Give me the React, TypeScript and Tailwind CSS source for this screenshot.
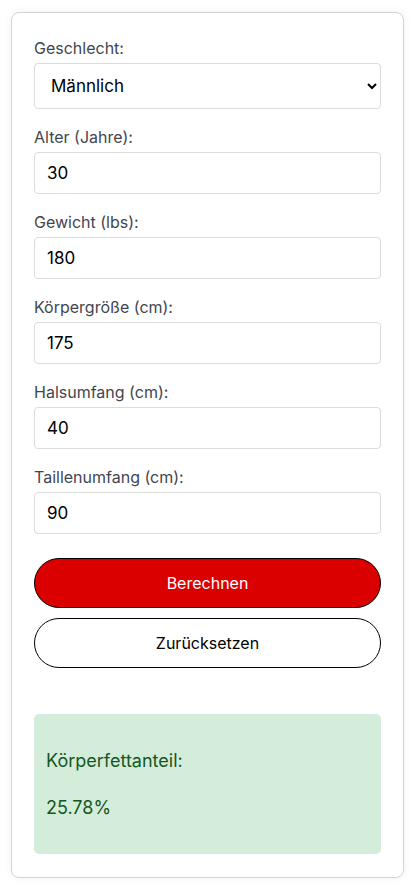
import { useState } from 'react';

const FIELDS: { key: string; label: string }[] = [
  { key: 'age', label: 'Alter (Jahre):' },
  { key: 'weight', label: 'Gewicht (lbs):' },
  { key: 'height', label: 'Körpergröße (cm):' },
  { key: 'neck', label: 'Halsumfang (cm):' },
  { key: 'waist', label: 'Taillenumfang (cm):' },
];

const DEFAULTS: Record<string, string> = {
  age: '30',
  weight: '180',
  height: '175',
  neck: '40',
  waist: '90',
};

export default function App() {
  const [gender, setGender] = useState('male');
  const [values, setValues] = useState<Record<string, string>>(DEFAULTS);
  const [result] = useState('25.78%');

  return (
    <div className="min-h-[895px] bg-white pl-[11px] pr-[12px] pt-[12px] pb-[18px] font-['Inter',_'Noto_Sans',_sans-serif] text-[16px]">
      <div className="rounded-[8px] border border-[#d4d4d4] bg-white px-[22px] pt-[23px] pb-[23px] shadow-[0_0_10px_rgba(0,0,0,0.06)]">
        <div className="mb-4">
          <label className="mb-[3px] block leading-6 text-[#3f4650]">Geschlecht:</label>
          <select
            value={gender}
            onChange={(e) => setGender(e.target.value)}
            className="block h-[46px] w-full rounded-[4px] border border-[#dcdcdc] bg-white px-3 text-[17px] text-black"
          >
            <option value="male">Männlich</option>
            <option value="female">Weiblich</option>
          </select>
        </div>

        {FIELDS.map((f, i) => (
          <div key={f.key} className={i === FIELDS.length - 1 ? 'mb-6' : 'mb-4'}>
            <label className="mb-[3px] block leading-6 text-[#3f4650]">{f.label}</label>
            <input
              type="text"
              value={values[f.key]}
              onChange={(e) => setValues({ ...values, [f.key]: e.target.value })}
              className="block h-[42px] w-full rounded-[4px] border border-[#dcdcdc] bg-white px-3 text-[17px] text-black outline-none"
            />
          </div>
        ))}

        <button className="block h-[50px] w-full rounded-full border border-black bg-[#db0000] text-white">
          Berechnen
        </button>
        <button className="mt-[10px] block h-[50px] w-full rounded-full border border-black bg-white text-black">
          Zurücksetzen
        </button>

        <div className="mt-[46px] flex flex-col gap-5 rounded-[5px] bg-[#d4edda] px-3 py-[33px] text-[18px] leading-[27px] text-[#155724]">
          <p>Körperfettanteil:</p>
          <p>{result}</p>
        </div>
      </div>
    </div>
  );
}
